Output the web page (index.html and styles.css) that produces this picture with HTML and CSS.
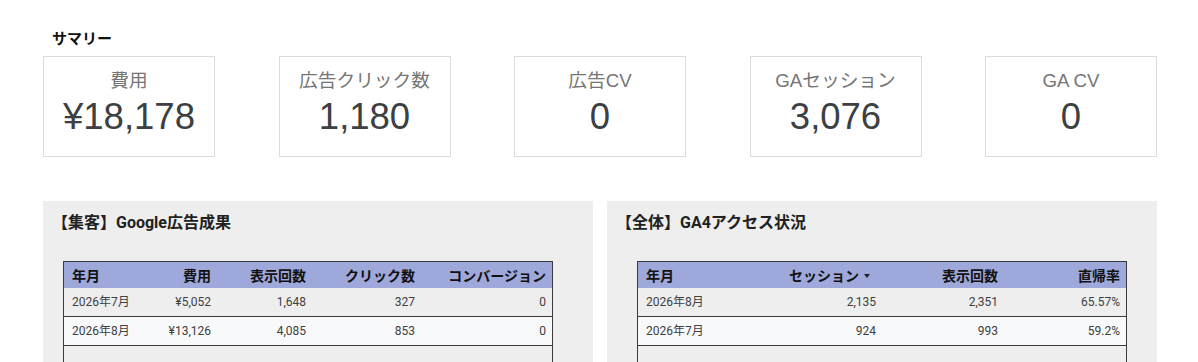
FILE: index.html
```html
<!DOCTYPE html>
<html lang="ja">
<head>
<meta charset="utf-8">
<link rel="stylesheet" href="styles.css">
</head>
<body>
<div class="page">
  <div class="summary-title">サマリー</div>
  <div class="cards">
    <div class="card"><div class="label">費用</div><div class="value">¥18,178</div></div>
    <div class="card"><div class="label">広告クリック数</div><div class="value">1,180</div></div>
    <div class="card"><div class="label">広告CV</div><div class="value">0</div></div>
    <div class="card"><div class="label">GAセッション</div><div class="value">3,076</div></div>
    <div class="card"><div class="label">GA CV</div><div class="value">0</div></div>
  </div>
  <div class="panels">
    <div class="panel">
      <div class="panel-title">【集客】Google広告成果</div>
      <div class="table-box left">
        <table class="tbl">
          <colgroup>
            <col class="l1"><col class="l2"><col class="l3"><col class="l4"><col class="l5">
          </colgroup>
          <thead>
            <tr><th class="tl">年月</th><th>費用</th><th>表示回数</th><th>クリック数</th><th>コンバージョン</th></tr>
          </thead>
          <tbody>
            <tr class="odd"><td class="tl">2026年7月</td><td>¥5,052</td><td>1,648</td><td>327</td><td>0</td></tr>
            <tr class="even"><td class="tl">2026年8月</td><td>¥13,126</td><td>4,085</td><td>853</td><td>0</td></tr>
          </tbody>
        </table>
      </div>
    </div>
    <div class="panel">
      <div class="panel-title">【全体】GA4アクセス状況</div>
      <div class="table-box right">
        <table class="tbl">
          <colgroup>
            <col class="r1"><col class="r1"><col class="r1"><col class="r1">
          </colgroup>
          <thead>
            <tr><th class="tl">年月</th><th class="sorted">セッション<span class="arrow"></span></th><th>表示回数</th><th>直帰率</th></tr>
          </thead>
          <tbody>
            <tr class="odd"><td class="tl">2026年8月</td><td>2,135</td><td>2,351</td><td>65.57%</td></tr>
            <tr class="even"><td class="tl">2026年7月</td><td>924</td><td>993</td><td>59.2%</td></tr>
          </tbody>
        </table>
      </div>
    </div>
  </div>
</div>
</body>
</html>
```
FILE: styles.css
```css
html, body {
  margin: 0;
  padding: 0;
  background: #ffffff;
}
body {
  font-family: "Liberation Sans", Arial, "Noto Sans CJK JP", sans-serif;
  overflow: hidden;
}
.page {
  width: 1114px;
  margin-left: 43px;
  padding-top: 28px;
}
.summary-title {
  font-size: 15px;
  font-weight: bold;
  line-height: 20px;
  color: #111111;
  padding-left: 9px;
  font-family: "Noto Sans CJK JP", sans-serif;
}
.cards {
  margin-top: 8px;
  display: flex;
  justify-content: space-between;
}
.card {
  box-sizing: border-box;
  width: 172px;
  height: 101px;
  border: 1px solid #dadce0;
  text-align: center;
  padding-top: 13px;
}
.label {
  font-size: 18.7px;
  line-height: 22px;
  color: #757575;
  font-family: "Liberation Sans", Arial, "Noto Sans CJK JP", sans-serif;
}
.value {
  margin-top: 4px;
  font-size: 36.5px;
  line-height: 42px;
  color: #3c4043;
}
.panels {
  margin-top: 44px;
  display: flex;
  gap: 14px;
}
.panel {
  width: 550px;
  height: 240px;
  background: #eeeeee;
  padding-top: 12px;
  box-sizing: border-box;
}
.panel-title {
  font-family: "Roboto", "Noto Sans CJK JP", sans-serif;
  font-size: 16px;
  font-weight: bold;
  line-height: 20px;
  color: #212121;
  padding-left: 9px;
}
.table-box {
  margin-top: 28px;
  width: 490px;
  height: 200px;
  box-sizing: border-box;
  border: 1px solid #3a3a3a;
}
.table-box.left { margin-left: 20px; }
.table-box.right { margin-left: 30px; }
.tbl {
  width: 488px;
  table-layout: fixed;
  border-collapse: separate;
  border-spacing: 0;
  font-family: "Roboto", "Noto Sans CJK JP", sans-serif;
}
.l1 { width: 76px; }
.l2 { width: 77px; }
.l3 { width: 95px; }
.l4 { width: 109px; }
.l5 { width: 131px; }
.r1 { width: 122px; }
.tbl th {
  background: #9fa8da;
  height: 26px;
  padding: 0 6px 0 8px;
  font-size: 14px;
  font-weight: bold;
  color: #111111;
  text-align: right;
  white-space: nowrap;
  font-family: "Noto Sans CJK JP", sans-serif;
  line-height: 16px;
}
.tbl th.sorted { padding-right: 12px; }
.tbl td {
  height: 28px;
  padding: 0 6px 0 8px;
  font-size: 12px;
  color: #404040;
  text-align: right;
  border-bottom: 1px solid #3a3a3a;
  white-space: nowrap;
  line-height: 14px;
}
.tbl .tl { text-align: left; }
.odd td { background: #eeeeee; }
.even td { background: #f8f9fa; }
.arrow {
  display: inline-block;
  width: 0;
  height: 0;
  margin-left: 5px;
  vertical-align: middle;
  position: relative;
  top: -1px;
  border-left: 3px solid transparent;
  border-right: 3px solid transparent;
  border-top: 4px solid #222222;
}
```
